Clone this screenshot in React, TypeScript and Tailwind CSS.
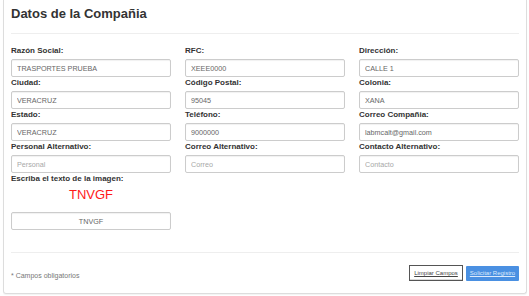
import React from "react";

type Field = { label: string; value?: string; placeholder?: string };

const rows: Field[][] = [
  [
    { label: "Razón Social:", value: "TRASPORTES PRUEBA" },
    { label: "RFC:", value: "XEEE0000" },
    { label: "Dirección:", value: "CALLE 1" },
  ],
  [
    { label: "Ciudad:", value: "VERACRUZ" },
    { label: "Código Postal:", value: "95045" },
    { label: "Colonia:", value: "XANA" },
  ],
  [
    { label: "Estado:", value: "VERACRUZ" },
    { label: "Teléfono:", value: "9000000" },
    { label: "Correo Compañia:", value: "labmcalt@gmail.com" },
  ],
  [
    { label: "Personal Alternativo:", placeholder: "Personal" },
    { label: "Correo Alternativo:", placeholder: "Correo" },
    { label: "Contacto Alternativo:", placeholder: "Contacto" },
  ],
];

const inputCls =
  "w-full h-[18px] rounded-[2px] border border-[#cccccc] bg-white px-[5px] text-[7.2px] text-[#666666] placeholder:text-[#a8a8a8] shadow-[inset_0_1px_1px_rgba(0,0,0,0.06)] outline-none";

const FieldBox: React.FC<{ f: Field }> = ({ f }) => (
  <div className="flex flex-col">
    <label className="h-[12px] leading-[12px] mb-[2px] text-[8px] font-bold text-[#333333]">{f.label}</label>
    <input className={inputCls} defaultValue={f.value} placeholder={f.placeholder} />
  </div>
);

export default function App() {
  return (
    <div className="w-[529px] h-[296px] bg-white" style={{ fontFamily: '"Liberation Sans", Arial, sans-serif' }}>
      <div className="ml-[3px] w-[524px] border-x border-b border-[#dddddd] rounded-b-[3px] px-[7px] pb-[11px] shadow-[0_1px_1px_rgba(0,0,0,0.05)]">
        <h2 className="pt-[6px] h-[22px] leading-[16px] text-[13px] font-semibold text-[#333333]">Datos de la Compañia</h2>
        <div className="mt-[11px] border-t border-[#eeeeee]" />

        <div className="mt-[11px] flex flex-col">
          {rows.map((r, i) => (
            <div key={i} className="grid grid-cols-3 gap-x-[14px]">
              {r.map((f) => (
                <FieldBox key={f.label} f={f} />
              ))}
            </div>
          ))}
          <div className="grid grid-cols-3 gap-x-[14px]">
            <div className="flex flex-col">
              <label className="h-[12px] leading-[12px] text-[8px] font-bold text-[#333333]">Escriba el texto de la imagen:</label>
              <div className="h-[20px] leading-[20px] text-center text-[13px] text-[#ff1a1a]">TNVGF</div>
              <input className={inputCls + " mt-[7px] text-center"} defaultValue="TNVGF" />
            </div>
          </div>
        </div>

        <div className="mt-[22px] border-t border-[#eeeeee]" />

        <div className="mt-[12px] flex items-center justify-between">
          <span className="pt-[6px] text-[7px] text-[#777777]">* Campos obligatorios</span>
          <div className="flex gap-[3px]">
            <button className="h-[16px] w-[54px] border border-[#555555] bg-white text-[6px] text-[#444444] underline shadow-[inset_0_-1px_0_rgba(0,0,0,0.15)]">
              Limpiar Campos
            </button>
            <button className="h-[15px] w-[53px] mt-[1px] rounded-[1px] bg-[#4a90e2] text-[6px] text-[#dceafc] underline">
              Solicitar Registro
            </button>
          </div>
        </div>
      </div>
    </div>
  );
}
